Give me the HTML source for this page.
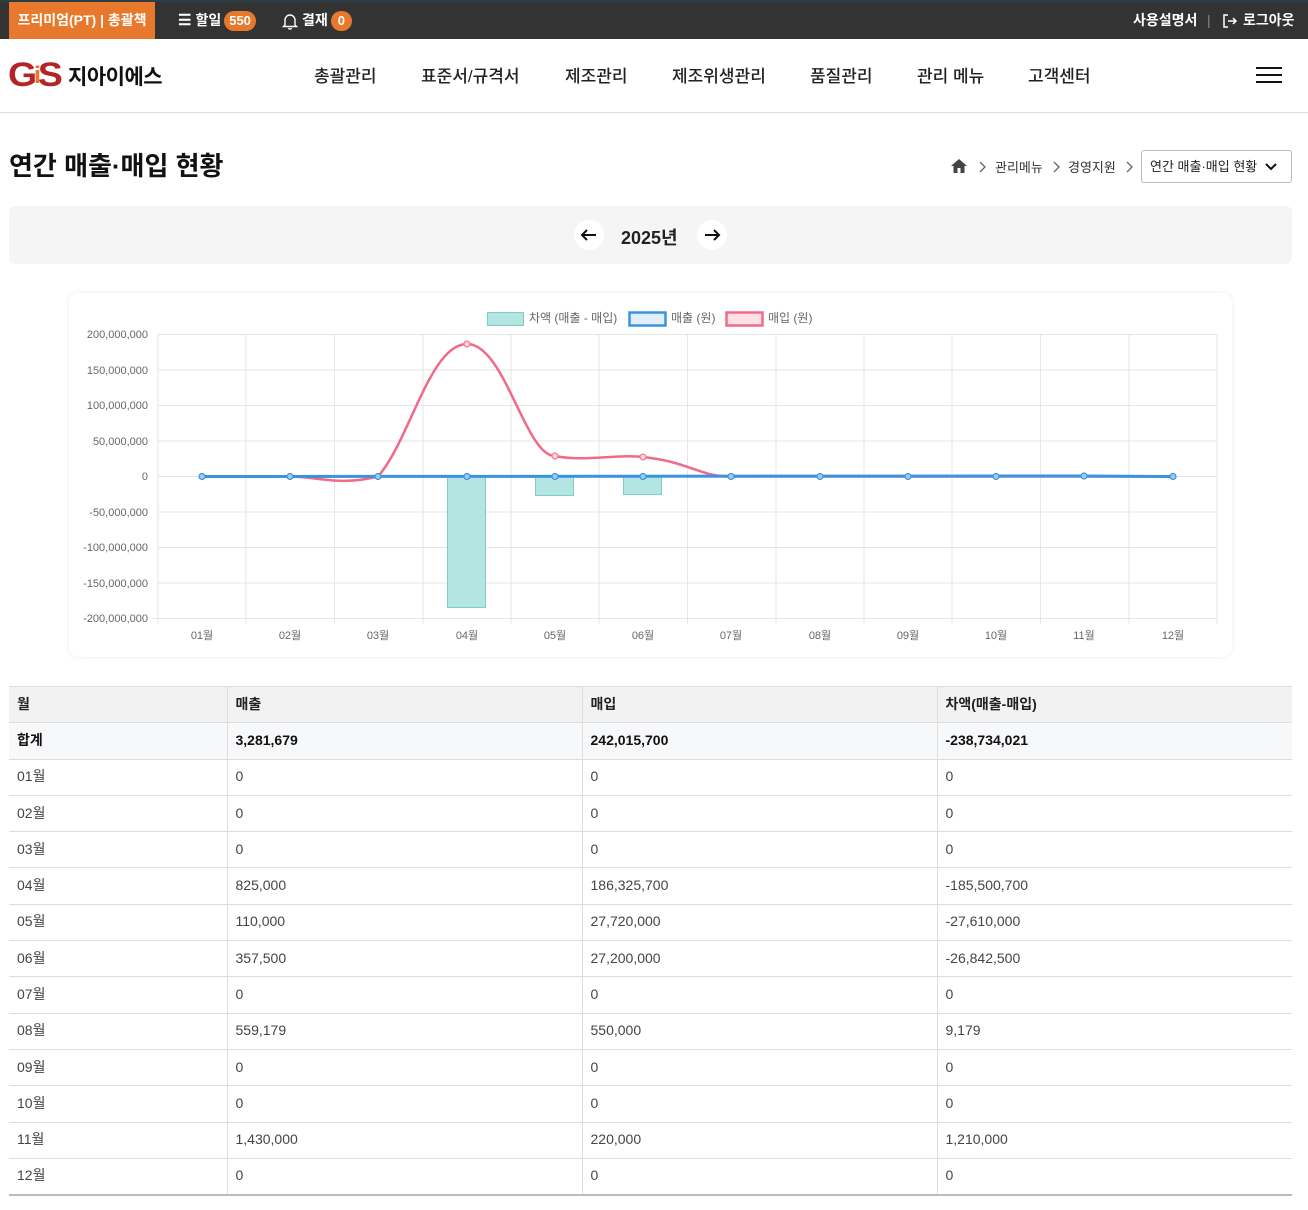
<!DOCTYPE html>
<html><head><meta charset="utf-8">
<style>
*{box-sizing:border-box;margin:0;padding:0}
body{width:1308px;height:1210px;background:#fff;font-family:"Liberation Sans","Noto Sans CJK KR",sans-serif;color:#222;position:relative;overflow:hidden}
.top{position:absolute;left:0;top:0;width:1308px;height:39px;background:#333;border-top:2px solid #2c3e45;color:#fff;font-size:14px;font-weight:bold}
.prem{position:absolute;left:9px;top:0;width:146px;height:37px;background:#e8792c;text-align:center;line-height:37px;font-size:14px}
.ti{position:absolute;top:0;line-height:37px;display:flex;align-items:center;height:37px}
.badge{display:inline-block;background:#e8792c;border-radius:11px;padding:0 5px;height:20px;line-height:20px;margin-left:3px;font-size:13px}
.nav{position:absolute;top:39px;left:0;width:1308px;height:74px;border-bottom:1px solid #ddd}
.menu{position:absolute;font-size:17px;font-weight:500;color:#222}
h1{position:absolute;left:9px;top:146px;font-size:26px;font-weight:bold;color:#111}
.crumb{position:absolute;top:157px;font-size:13px;color:#333}
.sel{position:absolute;left:1141px;top:150px;width:151px;height:33px;border:1px solid #bbb;border-radius:3px;font-size:13px;line-height:31px;padding-left:8px}
.yearbar{position:absolute;left:9px;top:206px;width:1283px;height:58px;background:#f5f5f5;border-radius:6px}
.circ{position:absolute;top:220px;width:30px;height:30px;border-radius:50%;background:#fff}
.card{position:absolute;left:69px;top:293px;width:1163px;height:364px;background:#fff;border-radius:10px;box-shadow:0 0 6px rgba(0,0,0,.08)}
table{position:absolute;left:9px;top:686px;width:1283px;border-collapse:collapse;font-size:14px}
td{height:36.3px;border-bottom:1px solid #ddd;padding-left:8px;color:#444;padding-bottom:2px}
td+td{border-left:1px solid #ddd}
tr.h td{background:#f2f2f2;font-weight:bold;color:#222;border-top:1px solid #ddd}
tr.s td{background:#f7f8fa;font-weight:bold;color:#111}
tr:last-child td{border-bottom:2px solid #bbb}
</style></head><body>
<div class="top">
 <div class="prem">프리미엄(PT) | 총괄책</div>
 <div class="ti" style="left:178px"><span style="font-size:15px;margin-right:4px">☰</span>할일<span class="badge">550</span></div>
 <div class="ti" style="left:282px"><svg width="16" height="18" viewBox="0 0 16 18" style="margin-right:4px"><path d="M3 13V8a5 5 0 0 1 10 0v5l1.5 1.5h-13z M6.5 16a1.6 1.6 0 0 0 3 0" fill="none" stroke="#fff" stroke-width="1.4"/></svg>결재<span class="badge" style="padding:0 7px">0</span></div>
 <div class="ti" style="left:1133px">사용설명서</div>
 <div class="ti" style="left:1207px;color:#888;font-weight:normal">|</div>
 <div class="ti" style="left:1222px"><svg width="16" height="16" viewBox="0 0 16 16" style="margin-right:5px"><path d="M6 2H2v12h4M6 8h8M11 5l3 3-3 3" fill="none" stroke="#fff" stroke-width="1.5"/></svg>로그아웃</div>
</div>
<div class="nav">
 <div style="position:absolute;left:8px;top:20px;font-size:34px;font-weight:900;color:#b52327;letter-spacing:-3px;font-family:'Liberation Sans',sans-serif;line-height:32px;transform:scaleX(1.1);transform-origin:left">G<span style="font-size:24px;color:#e8792c;position:relative;top:-3px">i</span>S</div>
 <div style="position:absolute;left:68px;top:22px;font-size:21px;font-weight:bold;color:#111;letter-spacing:-0.5px">지아이에스</div>
 <div class="menu" style="left:314px;top:23px">총괄관리</div>
 <div class="menu" style="left:421px;top:23px">표준서/규격서</div>
 <div class="menu" style="left:565px;top:23px">제조관리</div>
 <div class="menu" style="left:672px;top:23px">제조위생관리</div>
 <div class="menu" style="left:810px;top:23px">품질관리</div>
 <div class="menu" style="left:917px;top:23px">관리 메뉴</div>
 <div class="menu" style="left:1028px;top:23px">고객센터</div>
 <div style="position:absolute;left:1256px;top:28px;width:26px;height:2px;background:#111;box-shadow:0 7px 0 #111,0 14px 0 #111"></div>
</div>
<h1>연간 매출·매입 현황</h1>
<svg style="position:absolute;left:950px;top:158px" width="18" height="16" viewBox="0 0 18 16"><path d="M9 1L1 8h2.5v7h4v-5h3v5h4V8H17z" fill="#444"/></svg>
<svg style="position:absolute;left:978px;top:161px" width="8" height="12" viewBox="0 0 8 12"><path d="M2 1l5 5-5 5" fill="none" stroke="#666" stroke-width="1.3"/></svg>
<div class="crumb" style="left:995px">관리메뉴</div>
<svg style="position:absolute;left:1052px;top:161px" width="8" height="12" viewBox="0 0 8 12"><path d="M2 1l5 5-5 5" fill="none" stroke="#666" stroke-width="1.3"/></svg>
<div class="crumb" style="left:1068px">경영지원</div>
<svg style="position:absolute;left:1125px;top:161px" width="8" height="12" viewBox="0 0 8 12"><path d="M2 1l5 5-5 5" fill="none" stroke="#666" stroke-width="1.3"/></svg>
<div class="sel">연간 매출·매입 현황<svg style="position:absolute;right:14px;top:12px" width="12" height="8" viewBox="0 0 12 8"><path d="M1 1l5 5 5-5" fill="none" stroke="#111" stroke-width="2"/></svg></div>
<div class="yearbar"></div>
<div class="circ" style="left:574px"><svg width="30" height="30" viewBox="0 0 30 30"><path d="M22 15H8M13 10l-5 5 5 5" fill="none" stroke="#111" stroke-width="2"/></svg></div>
<div style="position:absolute;left:621px;top:224px;font-size:18px;font-weight:600;color:#222">2025년</div>
<div class="circ" style="left:697px"><svg width="30" height="30" viewBox="0 0 30 30"><path d="M8 15h14M17 10l5 5-5 5" fill="none" stroke="#111" stroke-width="2"/></svg></div>
<div class="card"></div>
<svg style="position:absolute;left:0;top:0" width="1308" height="680" viewBox="0 0 1308 680" font-family="Liberation Sans, Noto Sans CJK KR, sans-serif">
 <g stroke="#e6e6e6" stroke-width="1">
  <line x1="158" y1="334.5" x2="1217" y2="334.5"/><line x1="158" y1="370" x2="1217" y2="370"/><line x1="158" y1="405.5" x2="1217" y2="405.5"/><line x1="158" y1="441" x2="1217" y2="441"/><line x1="158" y1="476.5" x2="1217" y2="476.5"/><line x1="158" y1="512" x2="1217" y2="512"/><line x1="158" y1="547.5" x2="1217" y2="547.5"/><line x1="158" y1="583" x2="1217" y2="583"/><line x1="152" y1="618.5" x2="1217" y2="618.5"/>
  <line x1="158" y1="334" x2="158" y2="624"/><line x1="246" y1="334" x2="246" y2="624"/><line x1="334.5" y1="334" x2="334.5" y2="624"/><line x1="423" y1="334" x2="423" y2="624"/><line x1="511" y1="334" x2="511" y2="624"/><line x1="599" y1="334" x2="599" y2="624"/><line x1="687.5" y1="334" x2="687.5" y2="624"/><line x1="776" y1="334" x2="776" y2="624"/><line x1="864" y1="334" x2="864" y2="624"/><line x1="952" y1="334" x2="952" y2="624"/><line x1="1040.5" y1="334" x2="1040.5" y2="624"/><line x1="1129" y1="334" x2="1129" y2="624"/><line x1="1217" y1="334" x2="1217" y2="624"/>
 </g>
 <g font-size="11" fill="#666" text-anchor="end">
  <text x="148" y="338">200,000,000</text><text x="148" y="374">150,000,000</text><text x="148" y="409">100,000,000</text><text x="148" y="445">50,000,000</text><text x="148" y="480">0</text><text x="148" y="516">-50,000,000</text><text x="148" y="551">-100,000,000</text><text x="148" y="587">-150,000,000</text><text x="148" y="622">-200,000,000</text>
 </g>
 <g font-size="11" fill="#666" text-anchor="middle">
  <text x="202" y="639">01월</text><text x="290" y="639">02월</text><text x="378" y="639">03월</text><text x="467" y="639">04월</text><text x="555" y="639">05월</text><text x="643" y="639">06월</text><text x="731" y="639">07월</text><text x="820" y="639">08월</text><text x="908" y="639">09월</text><text x="996" y="639">10월</text><text x="1084" y="639">11월</text><text x="1173" y="639">12월</text>
 </g>
 <g fill="#b3e5e2" stroke="#7fcdc8" stroke-width="1">
  <rect x="447.5" y="476.5" width="38" height="131"/><rect x="535.5" y="476.5" width="38" height="19"/><rect x="623.5" y="476.5" width="38" height="18"/>
 </g>
 <path d="M202 476.5 L290 476.5 C320 477 340 486 378 476.5 C410 440 430 344 467 344 C505 344 525 456 555 456 C585 462 615 454 643 457 C690 462 700 477 731 476.5 L1173 476.5" fill="none" stroke="#f06b88" stroke-width="2.5"/>
 <g fill="#fbd3dc" stroke="#f06b88" stroke-width="1"><circle cx="467" cy="344" r="3"/><circle cx="555" cy="456" r="3"/><circle cx="643" cy="457" r="3"/></g>
 <path d="M202 476.5 L1084 476 L1173 476.5" fill="none" stroke="#3b93e0" stroke-width="3"/>
 <g fill="#9ccaf0" stroke="#3b93e0" stroke-width="1.2">
  <circle cx="202" cy="476.5" r="3"/><circle cx="290" cy="476.5" r="3"/><circle cx="378" cy="476.5" r="3"/><circle cx="467" cy="476.5" r="3"/><circle cx="555" cy="476.5" r="3"/><circle cx="643" cy="476.5" r="3"/><circle cx="731" cy="476.5" r="3"/><circle cx="820" cy="476.5" r="3"/><circle cx="908" cy="476.5" r="3"/><circle cx="996" cy="476.5" r="3"/><circle cx="1084" cy="476" r="3"/><circle cx="1173" cy="476.5" r="3"/>
 </g>
 <rect x="487.5" y="312.5" width="36" height="13" fill="#b3e5e2" stroke="#7fcdc8"/>
 <text x="529" y="322" font-size="12" fill="#666">차액 (매출 - 매입)</text>
 <rect x="629.5" y="312.5" width="36" height="13" fill="#e1effb" stroke="#3b93e0" stroke-width="2.5"/>
 <text x="671" y="322" font-size="12" fill="#666">매출 (원)</text>
 <rect x="726.5" y="312.5" width="36" height="13" fill="#fde1e7" stroke="#f06b88" stroke-width="2.5"/>
 <text x="768" y="322" font-size="12" fill="#666">매입 (원)</text>
</svg>
<table>
<colgroup><col style="width:218px"><col style="width:355px"><col style="width:355px"><col style="width:355px"></colgroup>
<tr class="h"><td>월</td><td>매출</td><td>매입</td><td>차액(매출-매입)</td></tr>
<tr class="s"><td>합계</td><td>3,281,679</td><td>242,015,700</td><td>-238,734,021</td></tr>
<tr><td>01월</td><td>0</td><td>0</td><td>0</td></tr>
<tr><td>02월</td><td>0</td><td>0</td><td>0</td></tr>
<tr><td>03월</td><td>0</td><td>0</td><td>0</td></tr>
<tr><td>04월</td><td>825,000</td><td>186,325,700</td><td>-185,500,700</td></tr>
<tr><td>05월</td><td>110,000</td><td>27,720,000</td><td>-27,610,000</td></tr>
<tr><td>06월</td><td>357,500</td><td>27,200,000</td><td>-26,842,500</td></tr>
<tr><td>07월</td><td>0</td><td>0</td><td>0</td></tr>
<tr><td>08월</td><td>559,179</td><td>550,000</td><td>9,179</td></tr>
<tr><td>09월</td><td>0</td><td>0</td><td>0</td></tr>
<tr><td>10월</td><td>0</td><td>0</td><td>0</td></tr>
<tr><td>11월</td><td>1,430,000</td><td>220,000</td><td>1,210,000</td></tr>
<tr><td>12월</td><td>0</td><td>0</td><td>0</td></tr>
</table>
</body></html>
